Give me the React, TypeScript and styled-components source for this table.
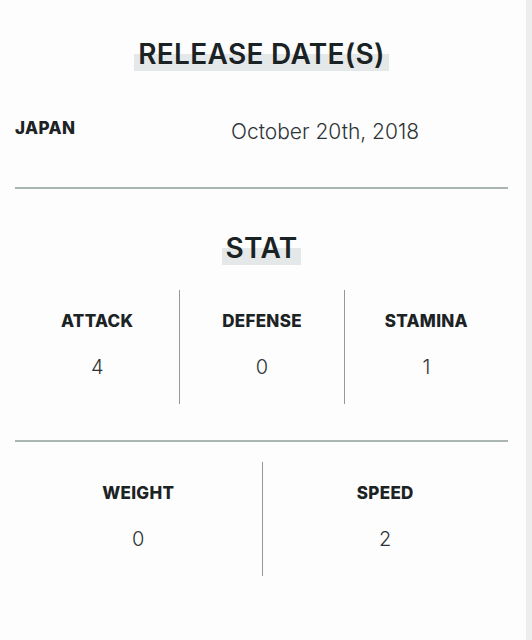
import React from "react";
import styled, { createGlobalStyle } from "styled-components";

const Global = createGlobalStyle`
  html, body { margin: 0; padding: 0; }
  body {
    background: #ededed;
    font-family: "Inter", "Roboto", sans-serif;
    color: #1c2325;
  }
`;

const Page = styled.div`
  width: 526px;
  min-height: 640px;
  background: #fdfdfd;
  box-sizing: border-box;
  padding: 0 18px 0 15px;
`;

const Section = styled.section<{ $top: number }>`
  padding-top: ${(p) => p.$top}px;
`;

const TitleWrap = styled.div`
  text-align: center;
  height: 40px;
`;

const Title = styled.h2`
  display: inline-block;
  margin: 0;
  font-size: 28px;
  line-height: 34px;
  font-weight: 600;
  letter-spacing: 0.3px;
  padding: 0 4px;
  color: #1b2224;
  background: linear-gradient(to bottom, transparent 50%, #e5e8e8 50%, #e5e8e8 100%);
`;

const ReleaseRow = styled.div`
  display: grid;
  grid-template-columns: 216px 1fr;
  align-items: start;
  padding: 41px 0 43px;
  border-bottom: 2px solid #aab6b4;
`;

const Country = styled.div`
  font-size: 17px;
  font-weight: 800;
  letter-spacing: 0.4px;
  line-height: 20px;
`;

const DateText = styled.div`
  font-size: 21px;
  font-weight: 300;
  color: #2e3436;
  line-height: 24px;
  padding-top: 2px;
`;

const StatGrid = styled.div<{ $cols: number; $divider?: boolean }>`
  display: grid;
  grid-template-columns: repeat(${(p) => p.$cols}, 1fr);
  ${(p) =>
    p.$divider
      ? "border-bottom: 2px solid #aab6b4; padding-bottom: 36px; margin-top: 19px;"
      : "padding-top: 20px;"}
`;

const StatCell = styled.div<{ $first?: boolean }>`
  display: flex;
  flex-direction: column;
  align-items: center;
  height: 114px;
  border-left: ${(p) => (p.$first ? "none" : "1.5px solid #8e9b99")};
  padding-top: 21px;
  box-sizing: border-box;
`;

const StatLabel = styled.div`
  font-size: 17px;
  font-weight: 800;
  letter-spacing: 0.3px;
  line-height: 20px;
`;

const StatValue = styled.div`
  font-size: 20px;
  font-weight: 300;
  color: #2e3436;
  line-height: 24px;
  margin-top: 24px;
`;

const stats1 = [
  { label: "ATTACK", value: 4 },
  { label: "DEFENSE", value: 0 },
  { label: "STAMINA", value: 1 },
];
const stats2 = [
  { label: "WEIGHT", value: 0 },
  { label: "SPEED", value: 2 },
];

export default function App() {
  return (
    <>
      <Global />
      <Page>
        <Section $top={37}>
          <TitleWrap>
            <Title>RELEASE DATE(S)</Title>
          </TitleWrap>
          <ReleaseRow>
            <Country>JAPAN</Country>
            <DateText>October 20th, 2018</DateText>
          </ReleaseRow>
        </Section>
        <Section $top={42}>
          <TitleWrap>
            <Title>STAT</Title>
          </TitleWrap>
          <StatGrid $cols={3} $divider>
            {stats1.map((s, i) => (
              <StatCell key={s.label} $first={i === 0}>
                <StatLabel>{s.label}</StatLabel>
                <StatValue>{s.value}</StatValue>
              </StatCell>
            ))}
          </StatGrid>
          <StatGrid $cols={2}>
            {stats2.map((s, i) => (
              <StatCell key={s.label} $first={i === 0}>
                <StatLabel>{s.label}</StatLabel>
                <StatValue>{s.value}</StatValue>
              </StatCell>
            ))}
          </StatGrid>
        </Section>
      </Page>
    </>
  );
}
